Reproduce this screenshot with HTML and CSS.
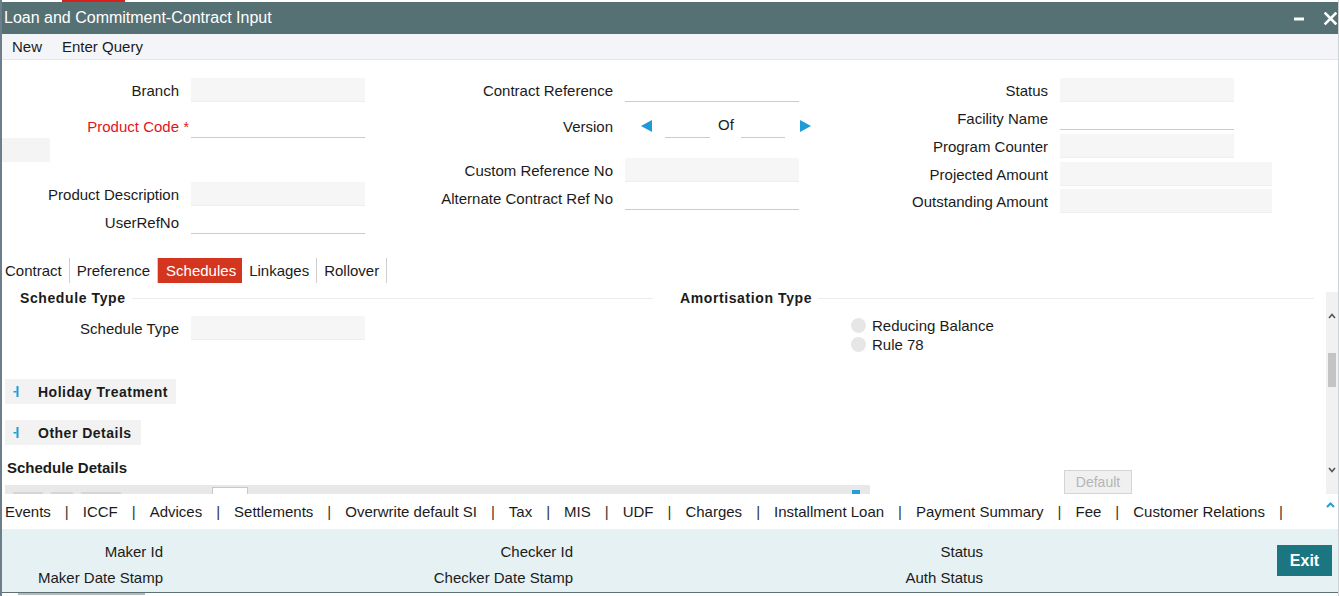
FILE: index.html
```html
<!DOCTYPE html>
<html lang="en">
<head>
<meta charset="utf-8">
<title>Loan and Commitment-Contract Input</title>
<link rel="stylesheet" href="styles.css">
</head>
<body>
<div class="window">
  <div class="topstrip"><span class="redmark"></span></div>
  <div class="titlebar">
    <span class="title">Loan and Commitment-Contract Input</span>
    <div class="winctl">
      <svg class="ic-min" width="10" height="4" viewBox="0 0 10 4"><rect x="0" y="0.5" width="10" height="3" fill="#fff"/></svg>
      <svg class="ic-close" width="13" height="13" viewBox="0 0 13 13"><path d="M1.5 1.5 L11.5 11.5 M11.5 1.5 L1.5 11.5" stroke="#fff" stroke-width="2.6" stroke-linecap="square"/></svg>
    </div>
  </div>
  <div class="menubar">
    <span class="menuitem">New</span>
    <span class="menuitem">Enter Query</span>
  </div>

  <div class="form">
    <div class="col col1">
      <div class="row"><span class="lbl">Branch</span><span class="inp ro"></span></div>
      <div class="row r-prod"><span class="lbl req">Product Code<span class="star">*</span></span><span class="inp wr"></span></div>
      <div class="graybox"></div>
      <div class="row r-desc"><span class="lbl">Product Description</span><span class="inp ro"></span></div>
      <div class="row r-user"><span class="lbl">UserRefNo</span><span class="inp wr"></span></div>
    </div>
    <div class="col col2">
      <div class="row"><span class="lbl">Contract Reference</span><span class="inp wr"></span></div>
      <div class="row r-ver">
        <span class="lbl">Version</span>
        <svg class="tri tri-l" width="11" height="12" viewBox="0 0 11 12"><polygon points="0,6 11,0 11,12" fill="#1e9ad6"/></svg>
        <span class="vinp v1"></span>
        <span class="of">Of</span>
        <span class="vinp v2"></span>
        <svg class="tri tri-r" width="11" height="12" viewBox="0 0 11 12"><polygon points="11,6 0,0 0,12" fill="#1e9ad6"/></svg>
      </div>
      <div class="row r-cust"><span class="lbl">Custom Reference No</span><span class="inp ro"></span></div>
      <div class="row r-alt"><span class="lbl">Alternate Contract Ref No</span><span class="inp wr"></span></div>
    </div>
    <div class="col col3">
      <div class="row"><span class="lbl">Status</span><span class="inp ro"></span></div>
      <div class="row r-m4"><span class="lbl">Facility Name</span><span class="inp wr"></span></div>
      <div class="row r-m4"><span class="lbl">Program Counter</span><span class="inp ro"></span></div>
      <div class="row r-m4"><span class="lbl">Projected Amount</span><span class="inp ro wide"></span></div>
      <div class="row r-m3"><span class="lbl">Outstanding Amount</span><span class="inp ro wide"></span></div>
    </div>
  </div>

  <div class="tabs">
    <span class="tab first">Contract</span>
    <span class="tab">Preference</span>
    <span class="tab active">Schedules</span>
    <span class="tab">Linkages</span>
    <span class="tab">Rollover</span>
  </div>

  <div class="content">
    <div class="main">
      <div class="fsrow">
        <div class="fs fs-left">
          <div class="legend">Schedule Type</div>
          <div class="row r-st"><span class="lbl">Schedule Type</span><span class="inp ro"></span></div>
        </div>
        <div class="fs fs-right">
          <div class="legend">Amortisation Type</div>
          <div class="radios">
            <div class="radiorow"><span class="radio"></span><span class="rlbl">Reducing Balance</span></div>
            <div class="radiorow"><span class="radio"></span><span class="rlbl">Rule 78</span></div>
          </div>
        </div>
      </div>

      <div class="coll c-hol">
        <svg class="ic-coll" width="6" height="11" viewBox="0 0 6 11"><rect x="3.5" y="0" width="2" height="11" fill="#1d9bd7"/><rect x="0.5" y="5" width="3" height="1.5" fill="#1d9bd7"/></svg>
        <span>Holiday Treatment</span>
      </div>
      <div class="coll c-oth">
        <svg class="ic-coll" width="6" height="11" viewBox="0 0 6 11"><rect x="3.5" y="0" width="2" height="11" fill="#1d9bd7"/><rect x="0.5" y="5" width="3" height="1.5" fill="#1d9bd7"/></svg>
        <span>Other Details</span>
      </div>

      <div class="sdrow">
        <div class="sdleft">
          <div class="sdtitle">Schedule Details</div>
          <div class="gridbar">
            <span class="gmark m1"></span><span class="gmark m2"></span><span class="gmark m3"></span>
            <span class="gbox"></span>
            <span class="gicon"></span>
          </div>
        </div>
        <button class="btn-default">Default</button>
      </div>
    </div>
    <div class="vscroll">
      <div class="track">
        <svg class="chev chev-up" width="8" height="6" viewBox="0 0 8 6"><path d="M1 5 L4 1.5 L7 5" stroke="#555" stroke-width="1.6" fill="none"/></svg>
        <span class="thumb"></span>
        <svg class="chev chev-down" width="8" height="6" viewBox="0 0 8 6"><path d="M1 1 L4 4.5 L7 1" stroke="#555" stroke-width="1.6" fill="none"/></svg>
      </div>
    </div>
  </div>

  <div class="subtabs">
    <span>Events</span><span class="sep">|</span>
    <span>ICCF</span><span class="sep">|</span>
    <span>Advices</span><span class="sep">|</span>
    <span>Settlements</span><span class="sep">|</span>
    <span>Overwrite default SI</span><span class="sep">|</span>
    <span>Tax</span><span class="sep">|</span>
    <span>MIS</span><span class="sep">|</span>
    <span>UDF</span><span class="sep">|</span>
    <span>Charges</span><span class="sep">|</span>
    <span>Installment Loan</span><span class="sep">|</span>
    <span>Payment Summary</span><span class="sep">|</span>
    <span>Fee</span><span class="sep">|</span>
    <span>Customer Relations</span><span class="sep">|</span>
    <svg class="chev-blue" width="9" height="6" viewBox="0 0 9 6"><path d="M1 5 L4.5 1.5 L8 5" stroke="#2a9bd6" stroke-width="2" fill="none"/></svg>
  </div>

  <div class="footer">
    <div class="fgrid">
      <span class="flbl">Maker Id</span>
      <span class="flbl">Checker Id</span>
      <span class="flbl">Status</span>
      <span class="flbl">Maker Date Stamp</span>
      <span class="flbl">Checker Date Stamp</span>
      <span class="flbl">Auth Status</span>
    </div>
    <button class="btn-exit">Exit</button>
  </div>
  <div class="hscroll"><span class="hthumb"></span></div>
</div>
</body>
</html>
```

FILE: styles.css
```css
* { box-sizing: border-box; }
html, body { margin: 0; padding: 0; }
body {
  font-family: "Liberation Sans", Arial, sans-serif;
  font-size: 15px;
  color: #1b1b1b;
  background: #fff;
  width: 1339px;
  height: 596px;
  overflow: hidden;
}
.window {
  width: 1339px;
  height: 596px;
  border-left: 2px solid #6e7d8a;
  border-right: 1px solid #cfd3d6;
  display: flex;
  flex-direction: column;
  overflow: hidden;
}
.topstrip { height: 2px; flex: none; background: #fff; }
.redmark { display: block; margin-left: 60px; width: 63px; height: 2px; background: #d9201b; }

.titlebar {
  height: 32px; flex: none;
  background: #567173;
  color: #fff;
  font-size: 16px;
  display: flex; align-items: center; justify-content: space-between;
  padding-left: 2px; padding-right: 1px;
}
.winctl { display: flex; align-items: center; }
.ic-min { margin-right: 20px; margin-top: 2px; }

.menubar {
  height: 26px; flex: none;
  background: #f4f5f9;
  border-bottom: 1px solid #e6e7ea;
  display: flex; align-items: center;
  padding-left: 10px;
}
.menuitem { margin-right: 20px; }

.form { height: 198px; flex: none; display: flex; }
.col { display: flex; flex-direction: column; padding-top: 18px; }
.col1 { width: 378px; }
.col2 { width: 420px; }
.col3 { flex: 1; }
.row { display: flex; align-items: center; height: 24px; flex: none; }
.lbl { text-align: right; flex: none; margin-right: 12px; white-space: nowrap; }
.col1 .lbl, .fs-left .lbl { width: 177px; }
.col2 .lbl { width: 233px; }
.col3 .lbl { width: 248px; }
.inp { width: 174px; height: 24px; flex: none; display: block; }
.inp.wide { width: 212px; }
.ro { background: #f6f6f6; border-bottom: 1px solid #eeeeee; }
.wr { background: #fff; border-bottom: 1px solid #cbcbcb; }
.req { color: #e3141e; }
.star { display: inline-block; width: 7px; margin-left: 3px; margin-right: -10px; font-size: 14px; }
.r-prod { margin-top: 12px; }
.graybox { width: 48px; height: 24px; background: #f4f4f4; flex: none; }
.r-desc { margin-top: 20px; }
.r-user { margin-top: 4px; }
.r-ver { margin-top: 12px; }
.r-cust { margin-top: 20px; }
.r-alt { margin-top: 4px; }
.r-m4 { margin-top: 4px; }
.r-m3 { margin-top: 3px; }
.tri { flex: none; }
.tri-l { margin-left: 16px; }
.vinp { display: block; height: 24px; border-bottom: 1px solid #cbcbcb; flex: none; }
.v1 { width: 45px; margin-left: 13px; }
.of { margin-left: 8px; margin-right: 7px; margin-top: -4px; }
.v2 { width: 44px; }
.tri-r { margin-left: 15px; }

.tabs { height: 25px; flex: none; display: flex; align-items: stretch; }
.tab {
  display: flex; align-items: center;
  padding: 0 7px 0 7px;
  border-right: 1px solid #cfcfcf;
}
.tab.first { padding-left: 3px; }
.tab.active { background: #d4351f; color: #fff; border-right: none; padding: 0 6px 0 8px; }

.content { height: 211px; flex: none; display: flex; }
.main { width: 1324px; flex: none; overflow: hidden; }
.fsrow { display: flex; margin-top: 7px; }
.fs-left { width: 658px; padding-right: 7px; }
.fs-right { width: 654px; padding-left: 20px; }
.fs-left .legend { padding-left: 18px; }
.legend { display: flex; align-items: center; height: 16px; font-weight: bold; font-size: 14px; letter-spacing: 0.6px; }
.legend::after { content: ""; flex: 1; height: 1px; background: #ececec; margin-left: 6px; }
.r-st { margin-top: 10px; }
.radios { margin-top: 10px; }
.radiorow { display: flex; align-items: center; height: 19px; }
.radio { width: 15px; height: 15px; border-radius: 50%; background: #e6e6e6; margin-left: 171px; flex: none; }
.rlbl { margin-left: 6px; }

.coll {
  display: flex; align-items: center;
  width: fit-content;
  height: 25px;
  background: #f2f2f2;
  margin-left: 3px;
  padding-left: 8px; padding-right: 8px;
  font-weight: bold; font-size: 14px;
  letter-spacing: 0.5px;
}
.ic-coll { margin-right: 19px; flex: none; }
.c-hol { margin-top: 25px; }
.c-oth { margin-top: 16px; padding-right: 9px; }

.sdrow { display: flex; margin-top: 14px; }
.sdleft { width: 868px; flex: none; }
.sdtitle { margin-left: 5px; height: 17px; line-height: 17px; font-weight: bold; font-size: 15px; }
.gridbar {
  margin-top: 9px; margin-left: 3px;
  width: 865px; height: 20px;
  background: #e8e8e8;
  display: flex; align-items: flex-start;
}
.gmark { display: block; height: 2px; margin-top: 7px; background: #d6d6d6; flex: none; }
.m1 { width: 30px; margin-left: 8px; }
.m2 { width: 22px; margin-left: 8px; }
.m3 { width: 40px; margin-left: 8px; }
.gbox { width: 36px; height: 18px; margin-top: 2px; margin-left: 91px; background: #fff; border: 1px solid #c8c8c8; flex: none; }
.gicon { margin-left: auto; margin-right: 10px; margin-top: 5px; width: 8px; height: 6px; background: #2a9bd6; }
.btn-default {
  margin-top: 11px; margin-left: 194px;
  width: 68px; height: 24px;
  background: #f0f0f0;
  border: 1px solid #d4d4d4;
  color: #b5b5b5;
  font-family: "Liberation Sans", Arial, sans-serif;
  font-size: 14px;
  padding: 0;
}

.vscroll { width: 12px; flex: none; padding-top: 9px; }
.track { height: 202px; background: #f1f1f1; display: flex; flex-direction: column; align-items: center; }
.chev { display: block; flex: none; }
.chev-up { margin-top: 21px; }
.thumb { display: block; width: 8px; height: 34px; background: #c4c4c4; margin-top: 34px; }
.chev-down { margin-top: 80px; }

.subtabs {
  height: 35px; flex: none;
  display: flex; align-items: center;
  padding-left: 3px;
  background: #fff;
  white-space: nowrap;
}
.sep { margin: 0 14px; color: #333; }
.chev-blue { margin-left: auto; margin-right: 3px; align-self: flex-start; margin-top: 8px; }

.footer {
  height: 64px; flex: none;
  background: #e5f1f3;
  border-bottom: 1px solid #5f7072;
  display: flex; align-items: flex-start;
  padding-top: 10px;
}
.fgrid { display: grid; grid-template-columns: 410px 410px 410px; grid-auto-rows: 24px; row-gap: 2px; flex: none; }
.flbl { width: 161px; display: flex; align-items: center; justify-content: flex-end; }
.btn-exit {
  margin-left: 45px; margin-top: 6px;
  width: 55px; height: 31px;
  background: #1b7682;
  border: none;
  color: #fff;
  font-family: "Liberation Sans", Arial, sans-serif;
  font-weight: bold;
  font-size: 16px;
  padding: 0;
}
.hscroll { height: 2px; flex: none; background: #fff; }
.hthumb { display: block; margin-left: 16px; width: 127px; height: 2px; background: #b2babc; }
```
